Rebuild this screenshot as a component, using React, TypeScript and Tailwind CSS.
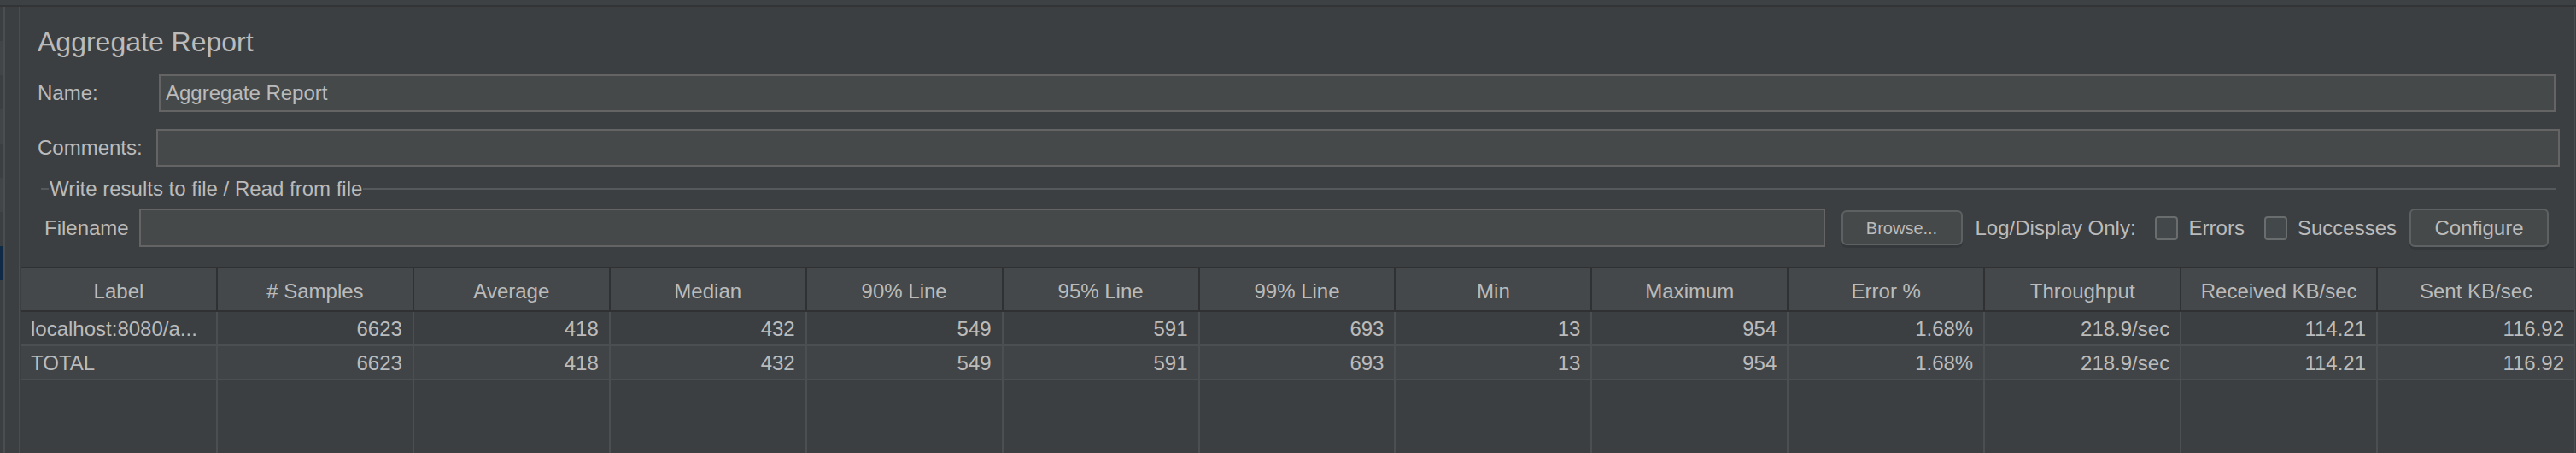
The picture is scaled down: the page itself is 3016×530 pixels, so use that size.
const columns = [
  "Label",
  "# Samples",
  "Average",
  "Median",
  "90% Line",
  "95% Line",
  "99% Line",
  "Min",
  "Maximum",
  "Error %",
  "Throughput",
  "Received KB/sec",
  "Sent KB/sec",
];

const stats = ["6623", "418", "432", "549", "591", "693", "13", "954", "1.68%", "218.9/sec", "114.21", "116.92"];

const rows = [
  { label: "localhost:8080/a...", values: stats, bg: "bg-[#3c3f41]" },
  { label: "TOTAL", values: stats, bg: "bg-[#404447]" },
];

const TextField = ({ className = "" }: { className?: string }) => (
  <div className={`h-full border-2 border-[#646464] bg-[#45494a] ${className}`} />
);

const Checkbox = () => (
  <div className="w-[27px] h-[28px] rounded-[4px] border-2 border-[#6a6d6e] bg-[#43494a]" />
);

const App = () => {
  return (
    <div className="w-[3016px] h-[530px] overflow-hidden flex flex-col bg-[#3c3f41] text-[#bbbbbb] text-[24px] leading-none [font-family:'Liberation_Sans',Arial,sans-serif]">
      <div className="h-[6px] bg-[#3e4143]" />
      <div className="h-[2px] bg-[#323436]" />

      <div className="flex-1 flex">
        {/* edge of the tree panel */}
        <div className="w-[4px] flex flex-col">
          <div className="h-[40px] bg-[#3c3f41]" />
          <div className="h-[40px] bg-[#424547]" />
          <div className="h-[40px] bg-[#3c3f41]" />
          <div className="h-[40px] bg-[#424547]" />
          <div className="h-[40px] bg-[#3c3f41]" />
          <div className="h-[40px] bg-[#424547]" />
          <div className="h-[40px] bg-[#3c3f41]" />
          <div className="h-[40px] bg-[#0e2a47]" />
          <div className="flex-1 bg-[#3c3f41]" />
        </div>
        <div className="w-[2px] bg-[#4b4e50]" />
        <div className="w-[16px]" />
        <div className="w-[2px] bg-[#4b4e50]" />

        <div className="flex-1 flex flex-col pt-[17px]">
          <div className="h-[48px] flex items-center pl-[20px] text-[32px]">Aggregate Report</div>

          <div className="mt-[14px] h-[44px] flex items-center pl-[20px] pr-[22px]">
            <span className="w-[142px] shrink-0">Name:</span>
            <div className="flex-1 h-full border-2 border-[#646464] bg-[#45494a] flex items-center pl-[6px]">
              Aggregate Report
            </div>
          </div>

          <div className="mt-[20px] h-[44px] flex items-center pl-[20px] pr-[17px]">
            <span className="w-[139px] shrink-0">Comments:</span>
            <TextField className="flex-1" />
          </div>

          <div className="mt-[14px] h-[24px] flex items-center pl-[24px] pr-[21px]">
            <div className="w-[9px] h-[2px] bg-[#56595b]" />
            <span className="px-[1px]">Write results to file / Read from file</span>
            <div className="flex-1 h-[2px] bg-[#56595b]" />
          </div>

          <div className="mt-[11px] h-[45px] flex items-center pl-[28px] pr-[30px]">
            <span className="w-[111px] shrink-0">Filename</span>
            <TextField className="flex-1" />
            <button className="ml-[19px] w-[142px] h-[41px] rounded-[6px] border-2 border-[#5e6162] bg-[#45494a] shadow-[0_3px_0_#35383a] text-[20px] text-[#bbbbbb]">
              Browse...
            </button>
            <span className="ml-[15px]">Log/Display Only:</span>
            <div className="ml-[22px]">
              <Checkbox />
            </div>
            <span className="ml-[13px]">Errors</span>
            <div className="ml-[23px]">
              <Checkbox />
            </div>
            <span className="ml-[12px]">Successes</span>
            <button className="ml-[15px] w-[163px] h-[45px] rounded-[6px] border-2 border-[#5e6162] bg-[#45494a] shadow-[0_3px_0_#35383a] text-[24px] text-[#bbbbbb]">
              Configure
            </button>
          </div>

          <div className="mt-[23px] ml-[1px] flex-1 flex flex-col border-t-2 border-[#2f3133]">
            <div className="h-[51px] grid grid-cols-[repeat(13,minmax(0,1fr))] bg-[#45484a] border-b-2 border-[#2f3133]">
              {columns.map((c, i) => (
                <div
                  key={c}
                  className={`flex items-center justify-center pt-[4px] ${i < columns.length - 1 ? "border-r-2 border-[#2f3133]" : ""}`}
                >
                  {c}
                </div>
              ))}
            </div>

            {rows.map((r) => (
              <div
                key={r.label}
                className={`h-[40px] grid grid-cols-[repeat(13,minmax(0,1fr))] border-b-2 border-[#4b4f51] ${r.bg}`}
              >
                <div className="flex items-center pl-[11px] pt-[2px] border-r-2 border-[#4b4f51] whitespace-nowrap overflow-hidden">
                  {r.label}
                </div>
                {r.values.map((v, i) => (
                  <div
                    key={i}
                    className={`flex items-center justify-end pr-[12px] pt-[2px] ${i < r.values.length - 1 ? "border-r-2 border-[#4b4f51]" : ""}`}
                  >
                    {v}
                  </div>
                ))}
              </div>
            ))}

            <div className="flex-1 grid grid-cols-[repeat(13,minmax(0,1fr))]">
              {columns.map((c, i) => (
                <div key={c} className={i < columns.length - 1 ? "border-r-2 border-[#4b4f51]" : ""} />
              ))}
            </div>
          </div>
        </div>

        <div className="w-[1px] bg-[#4b4e50]" />
        <div className="w-[1px]" />
      </div>
    </div>
  );
};

export default App;
